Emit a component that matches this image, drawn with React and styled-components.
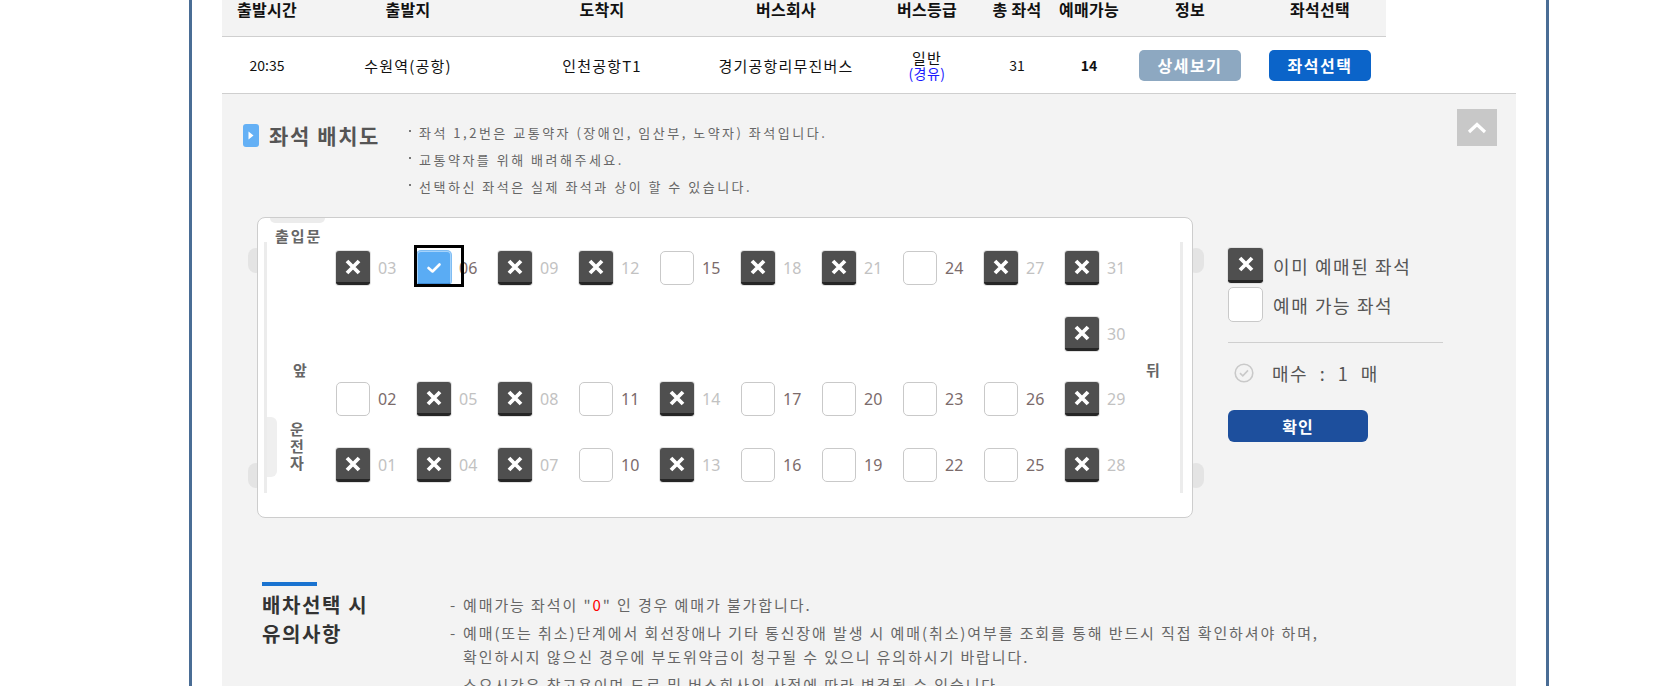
import React from 'react';
import styled, { createGlobalStyle } from 'styled-components';

const GlobalStyle = createGlobalStyle`
  html, body {
    margin: 0;
    padding: 0;
    background: #fff;
    overflow: hidden;
  }
  body {
    font-family: "Noto Sans CJK KR", "Noto Sans", sans-serif;
    color: #222;
  }
  * { box-sizing: border-box; }
`;

const COLS = '90px 192px 196px 172px 110px 70px 74px 128px 132px';

const Frame = styled.div`
  margin-left: 189px;
  width: 1360px;
  height: 686px;
  overflow: hidden;
  border-left: 3px solid #4a6d95;
  border-right: 3px solid #4a6d95;
  padding: 0 30px;
  background: #fff;
`;

const HeadRow = styled.div`
  display: grid;
  grid-template-columns: ${COLS};
  width: 1164px;
  height: 37px;
  background: #f3f3f3;
  border-bottom: 1px solid #cfcfcf;
`;

const HeadCell = styled.div`
  text-align: center;
  font-size: 16px;
  font-weight: 700;
  line-height: 18px;
  letter-spacing: 0.3px;
  color: #111;
`;

const DataRow = styled.div`
  display: grid;
  grid-template-columns: ${COLS};
  align-items: center;
  height: 57px;
  background: #fff;
  border-bottom: 1px solid #cfcfcf;
`;

const Cell = styled.div`
  text-align: center;
  font-size: ${p => (p.$small ? '14px' : '15px')};
  font-weight: ${p => (p.$bold ? 700 : 400)};
  letter-spacing: ${p => (p.$small ? '0' : '1.2px')};
  color: #111;
  line-height: 15px;
`;

const Via = styled.div`
  font-size: 14px;
  color: #1a1aff;
  line-height: 16px;
  letter-spacing: 0.5px;
`;

const RowButton = styled.button`
  justify-self: center;
  width: 102px;
  height: 31px;
  border: 0;
  border-radius: 5px;
  background: ${p => (p.$primary ? '#0b64c9' : '#8da8c1')};
  color: #fff;
  font-family: inherit;
  font-size: 16px;
  font-weight: 700;
  letter-spacing: 1.5px;
  padding: 0;
`;

const Panel = styled.div`
  background: #f3f3f3;
  height: 600px;
  padding: 15px 19px 0 21px;
`;

const TopRow = styled.div`
  display: flex;
  align-items: flex-start;
`;

const TitleBlock = styled.div`
  display: flex;
  align-items: center;
  gap: 10px;
  width: 166px;
  margin-top: 15px;
`;

const TitleIcon = styled.span`
  display: flex;
  align-items: center;
  justify-content: center;
  width: 16px;
  height: 23px;
  border-radius: 3px;
  background: #64b0f5;
`;

const Title = styled.h2`
  margin: 0;
  font-size: 21px;
  font-weight: 700;
  line-height: 23px;
  letter-spacing: 1.6px;
  color: #555;
`;

const Notes = styled.ul`
  margin: 10px 0 0;
  padding: 0;
  list-style: none;
`;

const Note = styled.li`
  position: relative;
  padding-left: 10px;
  font-size: 13px;
  line-height: 27px;
  letter-spacing: 2.5px;
  color: #666;
  &::before {
    content: '';
    position: absolute;
    left: 0;
    top: 11px;
    width: 2px;
    height: 2px;
    background: #777;
  }
`;

const UpButton = styled.button`
  margin-left: auto;
  width: 40px;
  height: 37px;
  border: 0;
  padding: 0;
  background: #c8c8c8;
  display: flex;
  align-items: center;
  justify-content: center;
`;

const SeatRow = styled.div`
  position: relative;
  display: flex;
  align-items: flex-start;
  margin-top: 17px;
  padding-left: 14px;
`;

const Wheel = styled.span`
  position: absolute;
  left: ${p => p.$x}px;
  top: ${p => p.$y}px;
  width: 16px;
  height: 25px;
  border-radius: 8px;
  background: #e4e4e4;
`;

const SeatBox = styled.div`
  position: relative;
  z-index: 1;
  width: 936px;
  height: 301px;
  background: #fff;
  border: 1px solid #cdcdcd;
  border-radius: 8px;
  padding: 33px 0 3px;
  display: grid;
  grid-template-columns: 78px repeat(10, 81px) 1fr;
  grid-template-rows: 66px 65px 66px 66px;
  &::before, &::after {
    content: '';
    position: absolute;
    top: 24px;
    bottom: 24px;
    width: 3px;
    background: #ececec;
  }
  &::before { left: 6px; }
  &::after { right: 9px; }
`;

const DoorTab = styled.span`
  position: absolute;
  left: 12px;
  top: 0;
  width: 55px;
  height: 5px;
  border-radius: 0 0 8px 8px;
  background: #ececec;
`;

const DriverTab = styled.span`
  position: absolute;
  left: 9px;
  top: 199px;
  width: 10px;
  height: 60px;
  border-radius: 0 6px 6px 0;
  background: #efefef;
`;

const SideLabel = styled.div`
  grid-column: ${p => p.$col};
  grid-row: ${p => p.$row};
  align-self: ${p => p.$align || 'start'};
  margin: ${p => p.$m || '0'};
  font-size: 15px;
  font-weight: 700;
  line-height: 18px;
  letter-spacing: 2px;
  color: #666;
  width: ${p => (p.$vertical ? '16px' : 'auto')};
  word-break: break-all;
  ${p => p.$vertical && 'line-height: 17px; letter-spacing: 0;'}
`;

const SeatCell = styled.div`
  position: relative;
  grid-column: ${p => p.$col};
  grid-row: ${p => p.$row};
  align-self: start;
  display: flex;
  align-items: center;
  gap: 8px;
`;

const Mark = styled.span`
  flex: none;
  display: flex;
  align-items: center;
  justify-content: center;
  width: ${p => p.$size || 34}px;
  height: ${p => p.$size || 34}px;
  ${p => p.$state === 'taken' && `
    background: #4f4f4f;
    border-radius: 3px;
    border-bottom: 3px solid #262626;
    box-shadow: 0 0 0 1px #e2e2e2;
  `}
  ${p => p.$state === 'free' && `
    background: #fff;
    border: 1px solid #c9c9c9;
    border-radius: 5px;
  `}
  ${p => p.$state === 'picked' && `
    background: #5aacf4;
    border: 1px solid #a6d3fb;
    border-bottom: 2px solid #3c8bd6;
    border-radius: 4px;
    box-shadow: 0 0 0 1px #7fbdf3;
  `}
`;

const SeatNo = styled.span`
  font-family: "Noto Sans", sans-serif;
  font-size: 16px;
  line-height: 20px;
  color: ${p => (p.$taken ? '#c2c2c2' : '#7b6b6b')};
`;

const FocusRing = styled.span`
  position: absolute;
  left: -3px;
  top: -6px;
  width: 50px;
  height: 42px;
  border: 3px solid #000;
`;

const Legend = styled.div`
  margin: 31px 0 0 35px;
  display: flex;
  flex-direction: column;
`;

const LegendItem = styled.div`
  display: flex;
  align-items: center;
  gap: 10px;
  height: 35px;
  margin-bottom: 4px;
  font-size: 18px;
  letter-spacing: 1.6px;
  color: #555;
`;

const Divider = styled.div`
  width: 215px;
  height: 1px;
  margin-top: 16px;
  background: #cfcfcf;
`;

const CountRow = styled.div`
  display: flex;
  align-items: center;
  gap: 18px;
  height: 24px;
  margin: 18px 0 0 6px;
  font-size: 18px;
  letter-spacing: 1.5px;
  word-spacing: 6px;
  color: #555;
`;

const ConfirmButton = styled.button`
  width: 140px;
  height: 32px;
  margin-top: 25px;
  border: 0;
  border-radius: 6px;
  background: #1d4f9d;
  color: #fff;
  font-family: inherit;
  font-size: 16px;
  font-weight: 700;
  letter-spacing: 1px;
  padding: 0;
`;

const Notice = styled.div`
  display: flex;
  margin: 64px 0 0 19px;
`;

const NoticeHead = styled.div`
  width: 188px;
  flex: none;
`;

const NoticeBar = styled.div`
  width: 55px;
  height: 4px;
  background: #1a73d0;
`;

const NoticeTitle = styled.h3`
  margin: 4px 0 0;
  font-size: 20px;
  font-weight: 700;
  line-height: 29px;
  letter-spacing: 1.6px;
  color: #333;
`;

const NoticeList = styled.ul`
  margin: 11px 0 0;
  padding: 0;
  list-style: none;
`;

const NoticeItem = styled.li`
  position: relative;
  padding-left: 13px;
  margin-bottom: 4px;
  font-size: 15px;
  line-height: 24px;
  letter-spacing: 1.9px;
  color: #666;
  white-space: nowrap;
  &::before {
    content: '-';
    position: absolute;
    left: 0;
    top: 0;
  }
`;

const Red = styled.b`
  color: #f00;
  font-weight: 400;
`;

const XIcon = ({ size = 18 }) => (
  <svg width={size} height={size} viewBox="0 0 18 18">
    <path d="M3 3 L15 15 M15 3 L3 15" stroke="#fff" strokeWidth="3.8" strokeLinecap="butt" fill="none" />
  </svg>
);

const CheckIcon = () => (
  <svg width="16" height="14" viewBox="0 0 16 14">
    <path d="M2.5 7 L6.5 10.5 L13.5 3.5" stroke="#fff" strokeWidth="2.6" fill="none" strokeLinecap="round" strokeLinejoin="round" />
  </svg>
);

const heads = ['출발시간', '출발지', '도착지', '버스회사', '버스등급', '총 좌석', '예매가능', '정보', '좌석선택'];

// [seat number, state, column, row]
const T = 'taken';
const F = 'free';
const seats = [
  ['03', T, 1, 1], ['06', 'picked', 2, 1], ['09', T, 3, 1], ['12', T, 4, 1], ['15', F, 5, 1],
  ['18', T, 6, 1], ['21', T, 7, 1], ['24', F, 8, 1], ['27', T, 9, 1], ['31', T, 10, 1],
  ['30', T, 10, 2],
  ['02', F, 1, 3], ['05', T, 2, 3], ['08', T, 3, 3], ['11', F, 4, 3], ['14', T, 5, 3],
  ['17', F, 6, 3], ['20', F, 7, 3], ['23', F, 8, 3], ['26', F, 9, 3], ['29', T, 10, 3],
  ['01', T, 1, 4], ['04', T, 2, 4], ['07', T, 3, 4], ['10', F, 4, 4], ['13', T, 5, 4],
  ['16', F, 6, 4], ['19', F, 7, 4], ['22', F, 8, 4], ['25', F, 9, 4], ['28', T, 10, 4],
];

function Seat({ no, state, col, row }) {
  return (
    <SeatCell $col={col + 1} $row={row}>
      <Mark $state={state}>
        {state === 'taken' && <XIcon />}
        {state === 'picked' && <CheckIcon />}
      </Mark>
      <SeatNo $taken={state === 'taken'}>{no}</SeatNo>
      {state === 'picked' && <FocusRing />}
    </SeatCell>
  );
}

export default function App() {
  return (
    <>
      <GlobalStyle />
      <Frame>
        <HeadRow>
          {heads.map(h => <HeadCell key={h}>{h}</HeadCell>)}
        </HeadRow>
        <DataRow>
          <Cell $small>20:35</Cell>
          <Cell>수원역(공항)</Cell>
          <Cell>인천공항T1</Cell>
          <Cell>경기공항리무진버스</Cell>
          <Cell>
            일반
            <Via>(경유)</Via>
          </Cell>
          <Cell $small>31</Cell>
          <Cell $small $bold>14</Cell>
          <RowButton>상세보기</RowButton>
          <RowButton $primary>좌석선택</RowButton>
        </DataRow>

        <Panel>
          <TopRow>
            <TitleBlock>
              <TitleIcon>
                <svg width="6" height="9" viewBox="0 0 6 9">
                  <path d="M0.5 0.5 L5.5 4.5 L0.5 8.5 Z" fill="#fff" />
                </svg>
              </TitleIcon>
              <Title>좌석 배치도</Title>
            </TitleBlock>
            <Notes>
              <Note>좌석 1,2번은 교통약자 (장애인, 임산부, 노약자) 좌석입니다.</Note>
              <Note>교통약자를 위해 배려해주세요.</Note>
              <Note>선택하신 좌석은 실제 좌석과 상이 할 수 있습니다.</Note>
            </Notes>
            <UpButton aria-label="접기">
              <svg width="22" height="14" viewBox="0 0 22 14">
                <path d="M3 11 L11 3.5 L19 11" stroke="#fff" strokeWidth="3.2" fill="none" />
              </svg>
            </UpButton>
          </TopRow>

          <SeatRow>
            <Wheel $x={5} $y={31} />
            <Wheel $x={5} $y={246} />
            <Wheel $x={945} $y={31} />
            <Wheel $x={945} $y={246} />
            <SeatBox>
              <DoorTab />
              <DriverTab />
              <SideLabel $col={1} $row={1} $m="-24px 0 0 17px">출입문</SideLabel>
              <SideLabel $col={1} $row={2} $align="end" $m="0 0 3px 35px">앞</SideLabel>
              <SideLabel $col={1} $row="3 / span 2" $vertical $m="38px 0 0 32px">운전자</SideLabel>
              {seats.map(([no, state, col, row]) => (
                <Seat key={no} no={no} state={state} col={col} row={row} />
              ))}
              <SideLabel $col={12} $row={2} $align="end" $m="0 0 3px 0">뒤</SideLabel>
            </SeatBox>

            <Legend>
              <LegendItem>
                <Mark $state="taken" $size={35}><XIcon /></Mark>
                이미 예매된 좌석
              </LegendItem>
              <LegendItem>
                <Mark $state="free" $size={35} />
                예매 가능 좌석
              </LegendItem>
              <Divider />
              <CountRow>
                <svg width="20" height="20" viewBox="0 0 20 20">
                  <circle cx="10" cy="10" r="8.8" stroke="#c9c9c9" strokeWidth="1.6" fill="none" />
                  <path d="M6 10.2 L8.8 12.8 L14 7.4" stroke="#c9c9c9" strokeWidth="1.6" fill="none" />
                </svg>
                <span>매수 : 1 매</span>
              </CountRow>
              <ConfirmButton>확인</ConfirmButton>
            </Legend>
          </SeatRow>

          <Notice>
            <NoticeHead>
              <NoticeBar />
              <NoticeTitle>
                배차선택 시<br />유의사항
              </NoticeTitle>
            </NoticeHead>
            <NoticeList>
              <NoticeItem>
                예매가능 좌석이 "<Red>0</Red>" 인 경우 예매가 불가합니다.
              </NoticeItem>
              <NoticeItem>
                예매(또는 취소)단계에서 회선장애나 기타 통신장애 발생 시 예매(취소)여부를 조회를 통해 반드시 직접 확인하셔야 하며,
                <br />
                확인하시지 않으신 경우에 부도위약금이 청구될 수 있으니 유의하시기 바랍니다.
              </NoticeItem>
              <NoticeItem>소요시간은 참고용이며 도로 및 버스회사의 사정에 따라 변경될 수 있습니다.</NoticeItem>
            </NoticeList>
          </Notice>
        </Panel>
      </Frame>
    </>
  );
}
